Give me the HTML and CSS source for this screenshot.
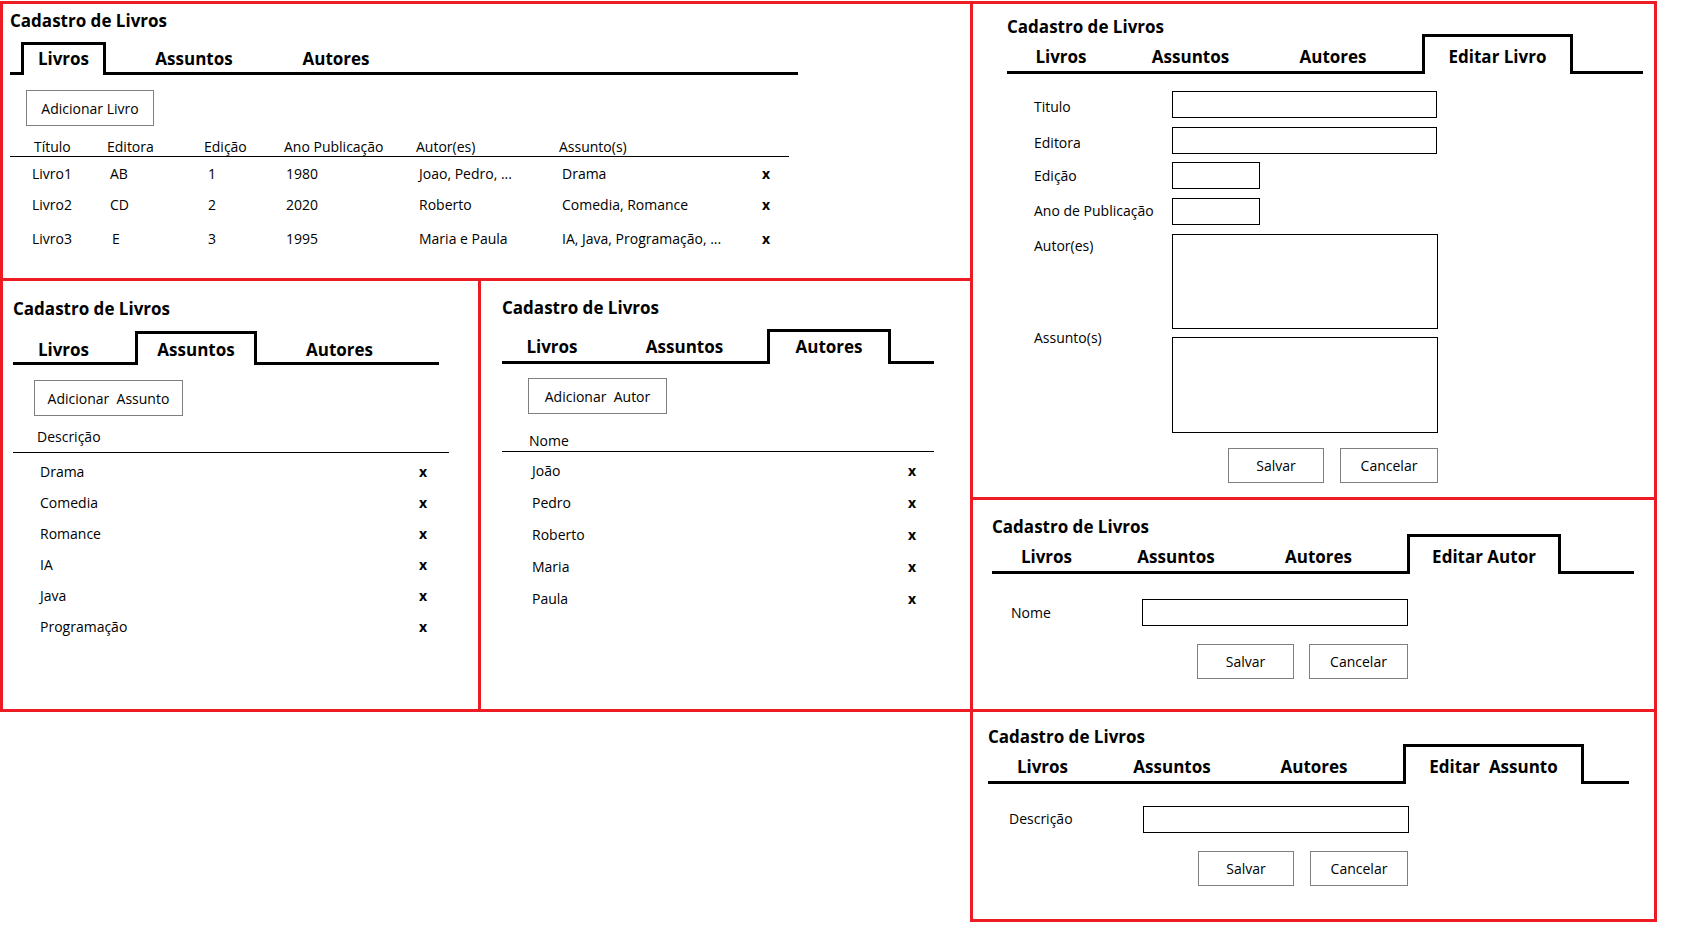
FILE: index.html
```html
<!DOCTYPE html>
<html lang="pt-BR">
<head>
<meta charset="utf-8">
<title>Cadastro de Livros - Wireframes</title>
<link rel="stylesheet" href="styles.css">
</head>
<body>
<div class="board">
  <div class="col-left">
    <section class="panel panel-livros">
      <h2 class="panel-title">Cadastro de Livros</h2>
      <nav class="tabs">
        <div class="tab tab-active">Livros</div>
        <div class="tab">Assuntos</div>
        <div class="tab">Autores</div>
      </nav>
      <button class="btn btn-add">Adicionar Livro</button>
      <div class="book-table">
        <div class="book-head">
          <span>Título</span><span>Editora</span><span>Edição</span><span>Ano Publicação</span><span>Autor(es)</span><span>Assunto(s)</span>
        </div>
        <div class="book-row">
          <span>Livro1</span><span>AB</span><span>1</span><span>1980</span><span>Joao, Pedro, ...</span><span>Drama</span><span class="del">x</span>
        </div>
        <div class="book-row">
          <span>Livro2</span><span>CD</span><span>2</span><span>2020</span><span>Roberto</span><span>Comedia, Romance</span><span class="del">x</span>
        </div>
        <div class="book-row">
          <span>Livro3</span><span class="c-e">E</span><span>3</span><span>1995</span><span>Maria e Paula</span><span>IA, Java, Programação, ...</span><span class="del">x</span>
        </div>
      </div>
    </section>
    <div class="panel-row">
      <section class="panel panel-assuntos">
        <h2 class="panel-title">Cadastro de Livros</h2>
        <nav class="tabs">
          <div class="tab">Livros</div>
          <div class="tab tab-active">Assuntos</div>
          <div class="tab">Autores</div>
        </nav>
        <button class="btn btn-add">Adicionar&nbsp; Assunto</button>
        <div class="list">
          <div class="list-head">Descrição</div>
          <div class="list-row"><span>Drama</span><span class="del">x</span></div>
          <div class="list-row"><span>Comedia</span><span class="del">x</span></div>
          <div class="list-row"><span>Romance</span><span class="del">x</span></div>
          <div class="list-row"><span>IA</span><span class="del">x</span></div>
          <div class="list-row"><span>Java</span><span class="del">x</span></div>
          <div class="list-row"><span>Programação</span><span class="del">x</span></div>
        </div>
      </section>
      <section class="panel panel-autores">
        <h2 class="panel-title">Cadastro de Livros</h2>
        <nav class="tabs">
          <div class="tab">Livros</div>
          <div class="tab">Assuntos</div>
          <div class="tab tab-active">Autores</div>
        </nav>
        <button class="btn btn-add">Adicionar&nbsp; Autor</button>
        <div class="list">
          <div class="list-head">Nome</div>
          <div class="list-row"><span>João</span><span class="del">x</span></div>
          <div class="list-row"><span>Pedro</span><span class="del">x</span></div>
          <div class="list-row"><span>Roberto</span><span class="del">x</span></div>
          <div class="list-row"><span>Maria</span><span class="del">x</span></div>
          <div class="list-row"><span>Paula</span><span class="del">x</span></div>
        </div>
      </section>
    </div>
  </div>

  <div class="col-right">
    <section class="panel panel-edit-livro">
      <h2 class="panel-title">Cadastro de Livros</h2>
      <nav class="tabs">
        <div class="tab">Livros</div>
        <div class="tab">Assuntos</div>
        <div class="tab">Autores</div>
        <div class="tab tab-active">Editar Livro</div>
      </nav>
      <form class="form">
        <label class="form-label label-low">Titulo</label>
        <input class="field" type="text">
        <label class="form-label label-low">Editora</label>
        <input class="field" type="text">
        <label class="form-label">Edição</label>
        <input class="field field-short" type="text">
        <label class="form-label label-high">Ano de Publicação</label>
        <input class="field field-short" type="text">
        <label class="form-label label-top">Autor(es)</label>
        <textarea class="field field-area"></textarea>
        <label class="form-label label-top label-raised">Assunto(s)</label>
        <textarea class="field field-area field-area-lg"></textarea>
      </form>
      <div class="actions">
        <button class="btn btn-save">Salvar</button>
        <button class="btn btn-cancel">Cancelar</button>
      </div>
    </section>

    <section class="panel panel-edit-autor">
      <h2 class="panel-title">Cadastro de Livros</h2>
      <nav class="tabs">
        <div class="tab">Livros</div>
        <div class="tab">Assuntos</div>
        <div class="tab">Autores</div>
        <div class="tab tab-active">Editar Autor</div>
      </nav>
      <div class="field-row">
        <label class="form-label">Nome</label>
        <input class="field" type="text">
      </div>
      <div class="actions">
        <button class="btn btn-save">Salvar</button>
        <button class="btn btn-cancel">Cancelar</button>
      </div>
    </section>

    <section class="panel panel-edit-assunto">
      <h2 class="panel-title">Cadastro de Livros</h2>
      <nav class="tabs">
        <div class="tab">Livros</div>
        <div class="tab">Assuntos</div>
        <div class="tab">Autores</div>
        <div class="tab tab-active">Editar&nbsp; Assunto</div>
      </nav>
      <div class="field-row">
        <label class="form-label">Descrição</label>
        <input class="field" type="text">
      </div>
      <div class="actions">
        <button class="btn btn-save">Salvar</button>
        <button class="btn btn-cancel">Cancelar</button>
      </div>
    </section>
  </div>
</div>
</body>
</html>
```

FILE: styles.css
```css
* { box-sizing: border-box; }

html, body {
  margin: 0;
  background: #fff;
}

body {
  padding-top: 1px;
  font-family: "Open Sans", "Noto Sans", sans-serif;
  font-size: 14px;
  line-height: 19px;
  color: #000;
}

.board {
  display: flex;
  align-items: flex-start;
}

.col-left {
  width: 973px;
  display: flex;
  flex-direction: column;
}

.col-right {
  width: 687px;
  margin-left: -3px;
  display: flex;
  flex-direction: column;
}

.panel-row {
  display: flex;
  margin-top: -3px;
}

.panel {
  border: 3px solid #ed1c24;
  display: flex;
  flex-direction: column;
  align-items: flex-start;
}

.panel-livros { height: 280px; padding: 5px 0 0 7px; }
.panel-assuntos { width: 481px; height: 434px; padding: 16px 0 0 10px; }
.panel-autores { width: 495px; height: 434px; margin-left: -3px; padding: 15px 0 0 21px; }
.panel-edit-livro { height: 499px; padding: 11px 0 0 34px; }
.panel-edit-autor { height: 215px; margin-top: -3px; padding: 15px 0 0 19px; }
.panel-edit-assunto { height: 213px; margin-top: -3px; padding: 13px 0 0 15px; }

.panel-title {
  margin: 0;
  font-size: 17px;
  line-height: 23px;
  font-weight: 700;
}

/* ---------- tabs ---------- */
.tabs {
  display: flex;
  align-items: flex-end;
  border-bottom: 3px solid #000;
}

.tab {
  font-size: 17px;
  line-height: 23px;
  font-weight: 700;
  text-align: center;
  white-space: nowrap;
  padding-bottom: 3px;
  flex: none;
}

.tab-active {
  border: 3px solid #000;
  border-bottom: 0;
  margin-bottom: -3px;
  background: #fff;
  padding-top: 8px;
  padding-bottom: 6px;
}

.panel-livros .tabs { width: 788px; margin-top: 10px; }
.panel-livros .tab { padding-bottom: 2px; }
.panel-livros .tab-active { padding-top: 2px; padding-bottom: 5px; }
.panel-livros .tab:nth-child(1) { margin-left: 11px; width: 85px; }
.panel-livros .tab:nth-child(2) { width: 176px; }
.panel-livros .tab:nth-child(3) { width: 108px; }

.panel-assuntos .tabs { width: 426px; margin-top: 11px; }
.panel-assuntos .tab { padding-bottom: 1px; }
.panel-assuntos .tab-active { padding-top: 4px; padding-bottom: 4px; }
.panel-assuntos .tab:nth-child(1) { width: 101px; }
.panel-assuntos .tab:nth-child(2) { margin-left: 21px; width: 122px; }
.panel-assuntos .tab:nth-child(3) { width: 165px; }

.panel-autores .tabs { width: 432px; margin-top: 10px; }
.panel-autores .tab-active { padding-top: 3px; padding-bottom: 6px; }
.panel-autores .tab:nth-child(1) { width: 100px; }
.panel-autores .tab:nth-child(2) { width: 165px; }
.panel-autores .tab:nth-child(3) { width: 124px; }

.panel-edit-livro .tabs { width: 636px; margin-top: -4px; }
.panel-edit-livro .tab:nth-child(1) { width: 108px; }
.panel-edit-livro .tab:nth-child(2) { width: 151px; }
.panel-edit-livro .tab:nth-child(3) { width: 134px; }
.panel-edit-livro .tab:nth-child(4) { margin-left: 22px; width: 151px; }

.panel-edit-autor .tabs { width: 642px; margin-top: -4px; }
.panel-edit-autor .tab:nth-child(1) { width: 109px; }
.panel-edit-autor .tab:nth-child(2) { width: 150px; }
.panel-edit-autor .tab:nth-child(3) { width: 135px; }
.panel-edit-autor .tab:nth-child(4) { margin-left: 21px; width: 154px; }

.panel-edit-assunto .tabs { width: 641px; margin-top: -4px; }
.panel-edit-assunto .tab:nth-child(1) { width: 109px; }
.panel-edit-assunto .tab:nth-child(2) { width: 150px; }
.panel-edit-assunto .tab:nth-child(3) { width: 134px; }
.panel-edit-assunto .tab:nth-child(4) { margin-left: 22px; width: 181px; }

/* ---------- buttons ---------- */
.btn {
  display: flex;
  align-items: center;
  justify-content: center;
  padding: 0;
  margin: 0;
  border: 1px solid #7f7f7f;
  background: #fff;
  color: #000;
  font-family: inherit;
  font-size: 14px;
  line-height: 19px;
  white-space: nowrap;
}

.panel-livros .btn-add { width: 128px; height: 36px; margin: 15px 0 0 16px; }
.panel-assuntos .btn-add { width: 149px; height: 36px; margin: 15px 0 0 21px; }
.panel-autores .btn-add { width: 139px; height: 36px; margin: 14px 0 0 26px; }

.actions {
  display: flex;
}

.btn-save, .btn-cancel { height: 35px; }

.panel-edit-livro .actions { gap: 16px; margin: 14.6px 0 0 221px; }
.panel-edit-livro .btn-save { width: 96px; }
.panel-edit-livro .btn-cancel { width: 98px; }

.panel-edit-autor .actions { gap: 15px; margin: 18px 0 0 205px; }
.panel-edit-autor .btn-save { width: 97px; }
.panel-edit-autor .btn-cancel { width: 99px; }

.panel-edit-assunto .actions { gap: 16px; margin: 18px 0 0 210px; }
.panel-edit-assunto .btn-save { width: 96px; }
.panel-edit-assunto .btn-cancel { width: 98px; }

/* ---------- book table ---------- */
.book-table {
  width: 779px;
  margin-top: 11px;
}

.book-head {
  display: grid;
  grid-template-columns: 73px 97px 80px 132px 143px 1fr;
  padding-left: 24px;
  border-bottom: 1px solid #000;
}

.book-row {
  display: grid;
  grid-template-columns: 78px 98px 78px 133px 143px 200px 8px;
  padding-left: 22px;
}

.book-row:nth-child(2) { margin-top: 7px; }
.book-row:nth-child(3) { margin-top: 12px; }
.book-row:nth-child(4) { margin-top: 15px; }

.c-e { padding-left: 2px; }

.del {
  font-weight: 700;
  width: 8px;
  text-align: center;
}

/* ---------- simple lists ---------- */
.list { margin-top: 11px; }

.panel-assuntos .list { width: 436px; }
.panel-autores .list { width: 432px; margin-top: 17px; }

.list-head {
  border-bottom: 1px solid #000;
}

.panel-assuntos .list-head { padding: 0 0 6px 24px; }
.panel-autores .list-head { padding: 0 0 1px 27px; }

.list-row {
  display: flex;
  justify-content: space-between;
}

.panel-assuntos .list-row { line-height: 31px; padding: 0 22px 0 27px; }
.panel-assuntos .list-row:nth-child(2) { margin-top: 3px; }

.panel-autores .list-row { line-height: 32px; padding: 0 18px 0 30px; }
.panel-autores .list-row:nth-child(2) { margin-top: 3px; }

/* ---------- forms ---------- */
.field {
  display: block;
  margin: 0;
  padding: 0;
  border: 1px solid #000;
  background: #fff;
  height: 27px;
  width: 265px;
  font-family: inherit;
  font-size: 14px;
  outline: none;
}

.field-short { width: 88px; }
.field-area { width: 266px; height: 95px; resize: none; }
.field-area-lg { height: 96px; }

.form {
  display: grid;
  grid-template-columns: 138px auto;
  align-items: center;
  row-gap: 8.7px;
  margin: 17px 0 0 27px;
}

.form-label { white-space: nowrap; }

.label-low { padding-top: 4px; }
.label-high { padding-bottom: 3px; }
.label-top { align-self: start; margin-top: 2px; }
.label-raised { margin-top: -9px; }

.field-row {
  display: flex;
  align-items: center;
}

.field-row .field { width: 266px; }

.panel-edit-autor .field-row { margin: 25px 0 0 19px; }
.panel-edit-autor .form-label { width: 131px; }

.panel-edit-assunto .field-row { margin: 22px 0 0 21px; }
.panel-edit-assunto .form-label { width: 134px; padding-bottom: 2px; }
```
